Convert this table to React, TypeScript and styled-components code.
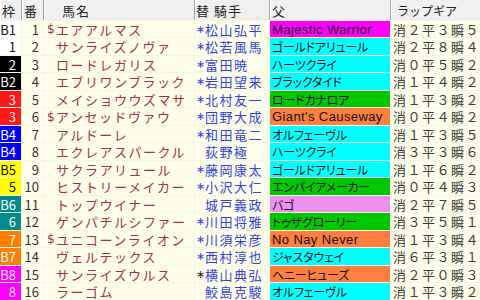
import React from "react";
import styled, { createGlobalStyle } from "styled-components";

const JP = `"Noto Sans CJK JP", "Noto Sans", sans-serif`;
const LATIN = `"Liberation Sans", "Noto Sans CJK JP", sans-serif`;
const COLS = "21px 21px 150px 74px 120px 89px";

const GlobalStyle = createGlobalStyle`
  html, body {
    margin: 0;
    padding: 0;
    width: 480px;
    height: 300px;
    overflow: hidden;
    background: #ffffec;
  }
  #root { width: 480px; height: 300px; }
`;

const Table = styled.div`
  display: flex;
  flex-direction: column;
  gap: 1px;
  width: 480px;
  height: 300px;
  background: #f6f6e6;
  font-family: ${JP};
  overflow: hidden;
`;

const HeaderRow = styled.div`
  display: grid;
  grid-template-columns: ${COLS};
  column-gap: 1px;
  height: 20px;
  flex: none;
  background: #a0a0a0;
`;

const HeaderCell = styled.div<{ $pl: number; $tight?: boolean }>`
  background: #f0f0f0;
  color: #222;
  font-size: ${(p) => (p.$tight ? 12 : 13)}px;
  letter-spacing: ${(p) => (p.$tight ? 0 : 1)}px;
  padding-left: ${(p) => p.$pl}px;
  display: flex;
  align-items: center;
  white-space: pre;
  box-shadow: inset 1px 0 0 #ffffff;
`;

const Row = styled.div<{ $h: number }>`
  display: grid;
  grid-template-columns: ${COLS};
  column-gap: 1px;
  height: ${(p) => p.$h}px;
  flex: none;
`;

const Cell = styled.div`
  background: #ffffec;
  display: flex;
  align-items: center;
  white-space: nowrap;
  overflow: hidden;
  font-size: 13px;
`;

const GateCell = styled(Cell)<{ $bg: string; $fg: string }>`
  background: ${(p) => p.$bg};
  color: ${(p) => p.$fg};
  justify-content: flex-end;
  padding-right: 5px;
`;

const NumCell = styled(Cell)`
  color: #333;
  justify-content: flex-end;
  padding-right: 4px;
`;

const NameCell = styled(Cell)`
  color: #a33232;
  letter-spacing: 1.5px;
  padding-left: 3px;
`;

const Prefix = styled.span`
  display: inline-block;
  width: 9px;
  flex: none;
  letter-spacing: 0;
  font-family: "DejaVu Sans", sans-serif;
  font-size: 12px;
`;

const JockeyCell = styled(Cell)`
  color: #3242e0;
  letter-spacing: 1.5px;
  padding-left: 1px;
`;

const Mark = styled.span<{ $dark?: boolean }>`
  display: inline-block;
  width: 9px;
  flex: none;
  letter-spacing: 0;
  font-family: "DejaVu Sans", sans-serif;
  font-size: 11px;
  color: ${(p) => (p.$dark ? "#222" : "#3242e0")};
`;

const SireCell = styled(Cell)<{ $bg: string; $latin: boolean }>`
  background: ${(p) => p.$bg};
  color: #111;
  padding-left: 2px;
  font-family: ${(p) => (p.$latin ? LATIN : JP)};
  font-size: ${(p) => (p.$latin ? 13 : 12)}px;
  font-feature-settings: ${(p) => (p.$latin ? "normal" : '"palt"')};
  letter-spacing: ${(p) => (p.$latin ? 0.4 : -0.2)}px;
`;

const LapCell = styled(Cell)`
  color: #3a3a3a;
  letter-spacing: 1.5px;
  padding-left: 2px;
`;

const GATE: Record<number, [string, string]> = {
  1: ["#ffffff", "#111"],
  2: ["#000000", "#ffffff"],
  3: ["#ff1818", "#ffe8e8"],
  4: ["#0000ff", "#ffffff"],
  5: ["#ffff00", "#111"],
  6: ["#008a8a", "#ffffff"],
  7: ["#ff8000", "#ffffff"],
  8: ["#ff00ff", "#ffe8ff"],
};

const SIRE = {
  m: "#ff00ff",
  c: "#00ffff",
  g: "#00c800",
  o: "#ff7f40",
  v: "#ee90f0",
};

type Horse = {
  gate: string;
  g: number;
  num: number;
  d: boolean;
  name: string;
  mark: "" | "blue" | "dark";
  jockey: string;
  sire: string;
  sc: keyof typeof SIRE;
  lap: string;
};

const horses: Horse[] = [
  { gate: "B1", g: 1, num: 1, d: true, name: "エアアルマス", mark: "blue", jockey: "松山弘平", sire: "Majestic Warrior", sc: "m", lap: "消２平３瞬５" },
  { gate: "1", g: 1, num: 2, d: false, name: "サンライズノヴァ", mark: "blue", jockey: "松若風馬", sire: "ゴールドアリュール", sc: "c", lap: "消２平８瞬４" },
  { gate: "2", g: 2, num: 3, d: false, name: "ロードレガリス", mark: "blue", jockey: "富田暁", sire: "ハーツクライ", sc: "c", lap: "消０平５瞬２" },
  { gate: "B2", g: 2, num: 4, d: false, name: "エブリワンブラック", mark: "blue", jockey: "岩田望来", sire: "ブラックタイド", sc: "c", lap: "消１平４瞬２" },
  { gate: "3", g: 3, num: 5, d: false, name: "メイショウウズマサ", mark: "blue", jockey: "北村友一", sire: "ロードカナロア", sc: "g", lap: "消１平３瞬２" },
  { gate: "3", g: 3, num: 6, d: true, name: "アンセッドヴァウ", mark: "blue", jockey: "団野大成", sire: "Giant's Causeway", sc: "o", lap: "消０平４瞬２" },
  { gate: "B4", g: 4, num: 7, d: false, name: "アルドーレ", mark: "blue", jockey: "和田竜二", sire: "オルフェーヴル", sc: "c", lap: "消１平３瞬５" },
  { gate: "B4", g: 4, num: 8, d: false, name: "エクレアスパークル", mark: "", jockey: "荻野極", sire: "ハーツクライ", sc: "c", lap: "消３平３瞬６" },
  { gate: "B5", g: 5, num: 9, d: false, name: "サクラアリュール", mark: "blue", jockey: "藤岡康太", sire: "ゴールドアリュール", sc: "c", lap: "消１平６瞬２" },
  { gate: "5", g: 5, num: 10, d: false, name: "ヒストリーメイカー", mark: "blue", jockey: "小沢大仁", sire: "エンパイアメーカー", sc: "g", lap: "消０平４瞬３" },
  { gate: "B6", g: 6, num: 11, d: false, name: "トップウイナー", mark: "", jockey: "城戸義政", sire: "バゴ", sc: "v", lap: "消２平７瞬５" },
  { gate: "6", g: 6, num: 12, d: false, name: "ゲンパチルシファー", mark: "blue", jockey: "川田将雅", sire: "トゥザグローリー", sc: "g", lap: "消３平５瞬１" },
  { gate: "7", g: 7, num: 13, d: true, name: "ユニコーンライオン", mark: "blue", jockey: "川須栄彦", sire: "No Nay Never", sc: "o", lap: "消１平３瞬４" },
  { gate: "B7", g: 7, num: 14, d: false, name: "ヴェルテックス", mark: "blue", jockey: "西村淳也", sire: "ジャスタウェイ", sc: "c", lap: "消６平３瞬１" },
  { gate: "B8", g: 8, num: 15, d: false, name: "サンライズウルス", mark: "dark", jockey: "横山典弘", sire: "ヘニーヒューズ", sc: "o", lap: "消２平０瞬３" },
  { gate: "8", g: 8, num: 16, d: false, name: "ラーゴム", mark: "", jockey: "鮫島克駿", sire: "オルフェーヴル", sc: "c", lap: "消１平３瞬２" },
];

const isLatin = (s: string) => /^[\x20-\x7e]+$/.test(s);

export default function App() {
  return (
    <>
      <GlobalStyle />
      <Table>
        <HeaderRow>
          <HeaderCell $pl={2}>枠</HeaderCell>
          <HeaderCell $pl={2}>番</HeaderCell>
          <HeaderCell $pl={18}>馬名</HeaderCell>
          <HeaderCell $pl={1}>{"替 騎手"}</HeaderCell>
          <HeaderCell $pl={2}>父</HeaderCell>
          <HeaderCell $pl={6} $tight>ラップギア</HeaderCell>
        </HeaderRow>
        {horses.map((h, i) => {
          const [bg, fg] = GATE[h.g];
          return (
            <Row key={h.num} $h={i % 2 === 0 ? 16 : 17}>
              <GateCell $bg={bg} $fg={fg}>{h.gate}</GateCell>
              <NumCell>{h.num}</NumCell>
              <NameCell>
                <Prefix>{h.d ? "$" : ""}</Prefix>
                {h.name}
              </NameCell>
              <JockeyCell>
                <Mark $dark={h.mark === "dark"}>{h.mark ? "∗" : ""}</Mark>
                {h.jockey}
              </JockeyCell>
              <SireCell $bg={SIRE[h.sc]} $latin={isLatin(h.sire)}>{h.sire}</SireCell>
              <LapCell>{h.lap}</LapCell>
            </Row>
          );
        })}
      </Table>
    </>
  );
}
